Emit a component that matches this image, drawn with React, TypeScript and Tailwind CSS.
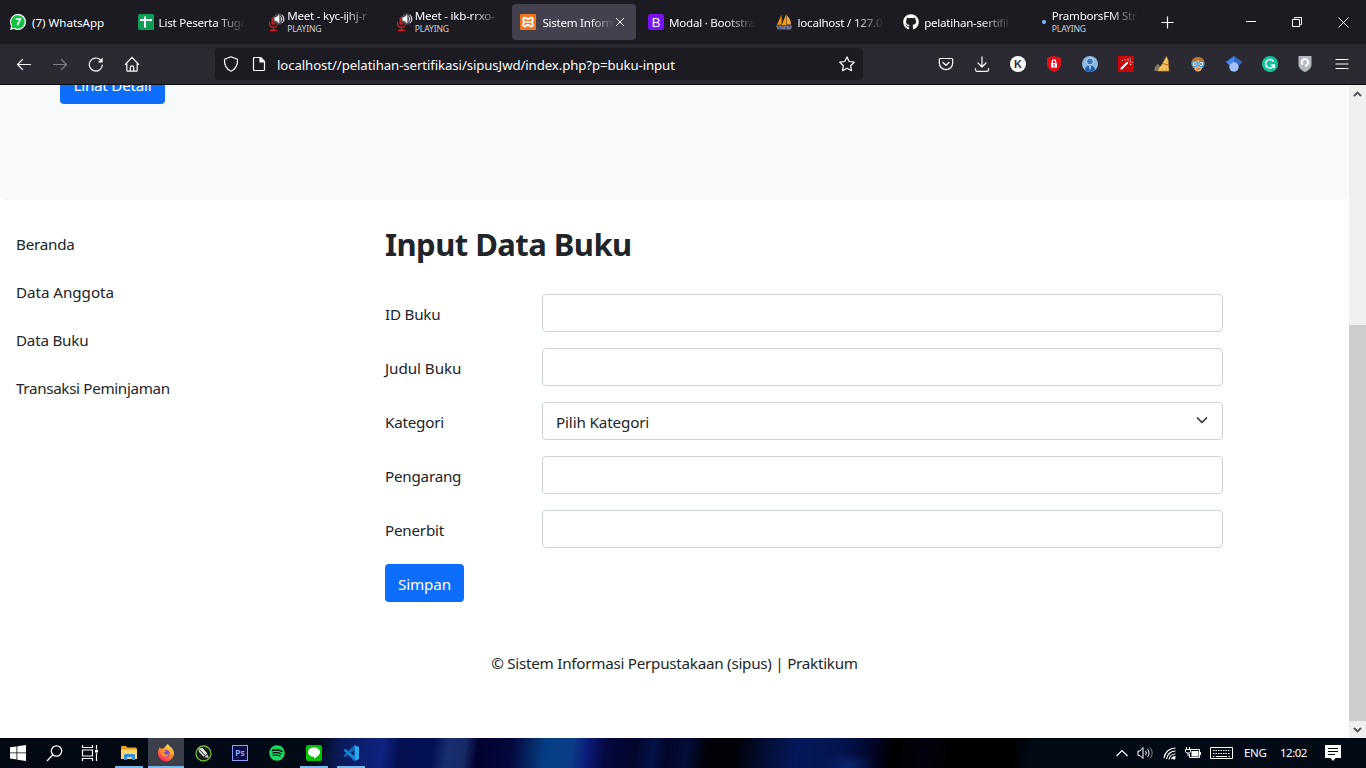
import React from "react";
import { FaGithub, FaSpotify } from "react-icons/fa";

const FONT = "font-['Noto_Sans','Open_Sans',sans-serif]";

function MicIcon() {
  return (
    <svg width="20" height="20" viewBox="0 0 20 20" fill="none">
      <rect x="4.500" y="5" width="3.600" height="8" rx="1.800" fill="#b3261e" />
      <path d="M2.500 9.500v1.700a4 4 0 0 0 8 0V9.500M6.500 15v3M3 18.300h7" stroke="#d3241f" strokeWidth="1.300" />
      <circle cx="12" cy="7" r="5.800" fill="#4b4a57" />
      <path d="M7.500 5.300h1.800l3-2.800v9l-3-2.800H7.500z" fill="#fff" />
      <path d="M13.500 4.500a3.300 3.300 0 0 1 0 5M14.800 3a5 5 0 0 1 0 8" stroke="#ddd" strokeWidth="1" />
    </svg>
  );
}

const WhatsAppIcon = () => (
  <svg width="16" height="16" viewBox="0 0 16 16">
    <path d="M0 16l1.100-4A8 8 0 1 1 4 14.900z" fill="#fff" />
    <path d="M1.400 14.600l.8-2.900a6.800 6.800 0 1 1 2.200 2.100z" fill="#12c143" />
    <path d="M5.500 5h4.800L7.300 11.500" stroke="#fff" strokeWidth="1.700" fill="none" />
  </svg>
);
const SheetIcon = () => (
  <svg width="16" height="16" viewBox="0 0 16 16">
    <rect width="16" height="16" rx="1.500" fill="#0f9d58" />
    <path d="M2 6h12M7 2.500v11" stroke="#fff" strokeWidth="2" />
  </svg>
);
const XamppIcon = () => (
  <svg width="16" height="16" viewBox="0 0 16 16" fill="none">
    <rect width="16" height="16" rx="1" fill="#f37623" />
    <path d="M5.300 3.700h-.6a1.400 1.400 0 0 0-1.400 1.400v.8c0 .9.600 1.600 1.400 2.100-.8.500-1.400 1.200-1.400 2.100v.8a1.400 1.400 0 0 0 1.400 1.400h.6c1.100 0 1.300-1.500 2.700-1.500s1.600 1.500 2.700 1.500h.6a1.400 1.400 0 0 0 1.400-1.400v-.8c0-.9-.6-1.600-1.400-2.100.8-.5 1.400-1.200 1.400-2.100v-.8a1.400 1.400 0 0 0-1.400-1.400h-.6C9.600 3.700 9.400 5.200 8 5.200S6.400 3.700 5.300 3.700z" stroke="#fff" strokeWidth="2" />
    <path d="M6 8h4" stroke="#fff" strokeWidth="1.600" />
  </svg>
);
const BootstrapIcon = () => (
  <span className="flex h-4 w-4 items-center justify-center rounded-[3px] bg-[#7a12f9] font-['Liberation_Sans',sans-serif] text-[13px] leading-none text-white">B</span>
);
const PmaIcon = () => (
  <svg width="16" height="16" viewBox="0 0 16 16">
    <path d="M5 1.500L1 11l4-.5zM10 .5L5.800 11h4.500z" fill="#f89c0e" />
    <path d="M5.300 2c1.200 3 1.200 6 .5 9M11 1.500c3 3 4 6 4 9h-4z" fill="#f5a83a" />
    <path d="M5.300 1v10M10.500 0v11" stroke="#a56a2a" strokeWidth=".8" />
    <path d="M0 11.500h16l-1 4H1.500z" fill="#777b9f" />
    <path d="M2 13h2M6 13h1.500M9 14h2M12.500 13h1.500M3 15h3" stroke="#373a52" />
  </svg>
);

type Tab = { icon: React.ReactNode; title: string; playing?: boolean; active?: boolean; cls: string };
const tabs: Tab[] = [
  { icon: <WhatsAppIcon />, title: "(7) WhatsApp", cls: "pl-1.5" },
  { icon: <SheetIcon />, title: "List Peserta Tuga", cls: "pl-[5px]" },
  { icon: <MicIcon />, title: "Meet - kyc-ijhj-r", playing: true, cls: "pl-[2px]" },
  { icon: <MicIcon />, title: "Meet - ikb-rrxo-", playing: true, cls: "pl-[2px]" },
  { icon: <XamppIcon />, title: "Sistem Inform", active: true, cls: "pl-[6px]" },
  { icon: <BootstrapIcon />, title: "Modal · Bootstra", cls: "pl-[5px]" },
  { icon: <PmaIcon />, title: "localhost / 127.0", cls: "pl-[6px]" },
  { icon: <FaGithub size={16} color="#fff" />, title: "pelatihan-sertifil", cls: "pl-[5px]" },
  { icon: <span className="ml-[11px] block h-1 w-1 rounded-full bg-[#7cc0ff]" />, title: "PramborsFM Str", playing: true, cls: "pl-[5px]" },
];

function TabItem({ tab }: { tab: Tab }) {
  const meet = tab.title.startsWith("Meet");
  const fade = tab.title !== "(7) WhatsApp";
  return (
    <div className={"flex h-9 w-[124px] shrink-0 items-center rounded-[4px] pl-2 " + (tab.active ? "bg-[#42414d]" : "")}>
      <div className={"flex shrink-0 items-center " + (meet ? "ml-[2px] w-5" : "w-4")}>{tab.icon}</div>
      <div className={"flex min-w-0 flex-1 flex-col " + tab.cls + (meet ? " -ml-[2px]" : "")}>
        <div className={"whitespace-nowrap text-[11.600px] leading-[15px] text-[#fbfbfe] " + (fade ? "tracking-[-0.250px] [mask-image:linear-gradient(to_right,black_65%,transparent)] " : "tracking-[-0.020px] ") + (tab.active ? "w-[73px]" : "w-[87px]")}>
          {tab.title}
        </div>
        {tab.playing && <div className="text-[8.600px] leading-[13px] tracking-[-0.150px] text-[#d0d0d6]">PLAYING</div>}
      </div>
      {tab.active && (
        <svg className="mr-[11px] shrink-0" width="10" height="10" viewBox="0 0 10 10"><path d="M1 1l8 8M9 1l-8 8" stroke="#fbfbfe" strokeWidth="1" /></svg>
      )}
    </div>
  );
}

const S = ({ children, s = 16 }: { children: React.ReactNode; s?: number }) => (
  <svg width={s} height={s} viewBox="0 0 16 16" fill="none" stroke="#fbfbfe" strokeWidth="1.200" strokeLinecap="round" strokeLinejoin="round">{children}</svg>
);

const extensions = [
  <S><path d="M2.300 2.500h11.400a1 1 0 0 1 1 1V7A6.700 6.700 0 0 1 1.300 7V3.500a1 1 0 0 1 1-1zM5 6.500l3 2.800 3-2.800" /></S>,
  <S><path d="M8 .8v10M4 7l4 4 4-4M1.500 12.500v1.300a1.500 1.500 0 0 0 1.500 1.500h10a1.500 1.500 0 0 0 1.500-1.500v-1.300" /></S>,
  <span className="flex h-4 w-4 items-center justify-center rounded-full bg-white font-['Liberation_Sans',sans-serif] text-[11px] font-bold leading-none text-[#2b2a33]">K</span>,
  <S><path d="M8 .5l6.500 1.800V8c0 4-3 6.300-6.500 7.500C4.500 14.300 1.500 12 1.500 8V2.300z" fill="#e40d16" stroke="#ee1c24" strokeWidth=".8" /><path d="M5 7h6v4.500H5z" fill="#fff" stroke="none" /><path d="M6.300 7V5.500a1.700 1.700 0 0 1 3.400 0V7" /><path d="M8 8.600v1.200" stroke="#e40d16" /></S>,
  <S><circle cx="8" cy="8" r="8" fill="#8db9e5" stroke="none" /><circle cx="8" cy="5.500" r="3.500" fill="#3a76b8" stroke="#c4e0fa" strokeWidth="1" /><path d="M3 14c0-3 2-4.500 5-4.500s5 1.500 5 4.500a8 8 0 0 1-10 0z" fill="#1e60ac" stroke="none" /><path d="M7 10l1 5 1-5z" fill="#c4e0fa" stroke="none" /></S>,
  <S><path d="M0 0h16v16H0z" fill="#c90505" stroke="none" /><path d="M3.500 12.500L9 7" strokeWidth="2.200" /><path d="M7 3.500l.5.700M10 3v1M12.500 5l-1 .7M13 8.500l-1-.4M4.500 4.500h.1M12.500 2.500h.1M14 6.500h.1" strokeWidth="1" /></S>,
  <S><path d="M.5 15c-.5-3 1-6 4-7l4 7z" fill="#77796f" stroke="none" /><path d="M12.500.8c1.500 2 2 4.500 1.700 7L15 15H4c.500-2.500 1.500-4 3-5z" fill="#f0c761" stroke="#c48b30" strokeWidth=".7" /><path d="M8.500 7.500l5.500 1.500" stroke="#c95520" strokeWidth="1" /><path d="M9 12l-1 2.500M12 12v2.500" stroke="#d89a35" strokeWidth=".9" /></S>,
  <S><path d="M1.500 8C1 3.500 4 1 8 1s7 2.500 6.500 7l-1.500 4H3z" fill="#b8752f" stroke="none" /><path d="M4 6l4-2 4 2v5c0 3-2 4.500-4 4.500S4 14 4 11z" fill="#f4b978" stroke="none" /><circle cx="4.700" cy="8" r="2.600" fill="#e9f7ff" stroke="#3d9bdc" /><circle cx="11.300" cy="8" r="2.600" fill="#e9f7ff" stroke="#3d9bdc" /><circle cx="5" cy="8" r=".8" fill="#222" stroke="none" /><circle cx="11" cy="8" r=".8" fill="#222" stroke="none" /><path d="M6.500 13h3" stroke="#b03c2c" strokeWidth=".9" /></S>,
  <S><path d="M8 0l8 6-3.500 3.500h-9L0 6z" fill="#4285f4" stroke="none" /><path d="M8 0l8 6-3.500 3.500L8 6z" fill="#356ac3" stroke="none" /><circle cx="8" cy="11" r="4.700" fill="#a0c3ff" stroke="none" /></S>,
  <S><circle cx="8" cy="8" r="8" fill="#15c39a" stroke="none" /><path d="M11.300 5A4.300 4.300 0 1 0 12 9.200M9.500 9h2.800v2.500" strokeWidth="1.500" /></S>,
  <S><path d="M1.500 0h13v8.500c0 3.500-3 6-6.500 7.500-3.500-1.500-6.500-4-6.500-7.500z" fill="#b3b7bf" stroke="none" /><path d="M5.300 8A3.200 3.200 0 1 1 10 8.800L8.500 9.800" strokeWidth="2" stroke="#fff" /></S>,
];

function Toolbar() {
  return (
    <div className="flex h-[41px] shrink-0 items-center border-b border-[#0c0c0d] bg-[#2b2a33]">
      <div className="flex w-[215px] shrink-0 items-center gap-5 pl-4">
        <S><path d="M1.500 8.500h13M6.500 3.500l-5 5 5 5" /></S>
        <div className="opacity-40"><S><path d="M1.500 8.500h13M9.500 3.500l5 5-5 5" /></S></div>
        <S><path d="M14.300 9A6.500 6.500 0 1 1 12.500 4" /><path d="M14.600 1.500v5H9.600z" fill="#fbfbfe" stroke="none" /></S>
        <S><path d="M1.300 8.300L8 1.300l6.700 7M2.800 7v7.200a1 1 0 0 0 1 1h8.400a1 1 0 0 0 1-1V7M6.300 15v-3.500a1.700 1.700 0 0 1 3.400 0V15" /></S>
      </div>
      <div className="flex h-8 w-[648px] shrink-0 items-center rounded-[4px] bg-[#1c1b22] pl-2">
        <S><path d="M8 .8l6.500 2.400c.3 5.500-1.500 9.800-6.500 12C3 13 1.200 8.700 1.500 3.200z" /></S>
        <div className="ml-3 flex"><S><path d="M3.500 1.500h6L13.500 5.500v8a1 1 0 0 1-1 1h-9a1 1 0 0 1-1-1v-11a1 1 0 0 1 1-1z" /><path d="M9 1.500l4.500 4.500H9z" fill="#fbfbfe" /></S></div>
        <div className="ml-[10px] flex-1 whitespace-nowrap pt-px text-[13.200px] leading-5 tracking-[-0.080px] text-[#fbfbfe]">localhost//pelatihan-sertifikasi/sipusJwd/index.php?p=buku-input</div>
        <div className="mr-2"><S><path d="M8 .9l2.200 4.600 5 .7-3.600 3.500.9 5L8 12.300l-4.500 2.400.9-5L.8 6.200l5-.7z" /></S></div>
      </div>
      <div className="ml-[75px] flex items-center gap-5">
        {extensions.map((e, i) => <div key={i} className={"flex h-4 w-4 items-center" + (i === 10 ? " -ml-px mr-px" : "")}>{e}</div>)}
      </div>
      <div className="ml-5"><S><path d="M2 3.500h12M2 8h12M2 12.500h12" /></S></div>
    </div>
  );
}

const fields = ["ID Buku", "Judul Buku", "Kategori", "Pengarang", "Penerbit"];

function Page() {
  return (
    <div className="flex h-[653px] shrink-0 bg-white">
      <div className="flex w-[1349px] flex-col overflow-hidden text-[15.200px] leading-6 tracking-[-0.220px] text-[#212529]">
        <div className="h-[115px] shrink-0 overflow-hidden rounded-b-[5px] bg-[#f8f9fa] pl-[60px]">
          <div className="-mt-[19px] flex h-[38px] w-[105px] items-center justify-center rounded-[4px] bg-[#0d6efd] text-white">Lihat Detail</div>
        </div>
        <div className="flex">
          <nav className="flex w-[385px] flex-col gap-6 pl-4 pt-8">
            <a>Beranda</a><a className="tracking-[-0.050px]">Data Anggota</a><a>Data Buku</a><a className="tracking-[-0.330px]">Transaksi Peminjaman</a>
          </nav>
          <main className="w-[838px]">
            <h1 className="mt-6 text-[31px] font-bold leading-[40px] tracking-[-0.550px]">Input Data Buku</h1>
            <div className="mt-[30px] flex flex-col gap-4">
              {fields.map((f) => (
                <div key={f} className="flex h-[38px]">
                  <label className={"w-[157px] pt-2 " + (f === "Judul Buku" ? "tracking-[-0.050px]" : "")}>{f}</label>
                  <div className="flex flex-1 items-center justify-between rounded-[4px] border border-[#ced4da] px-[13px] pt-[2px]">
                    {f === "Kategori" && (
                      <>
                        <span className="tracking-[-0.130px]">Pilih Kategori</span>
                        <svg className="mb-1" width="14" height="12" viewBox="0 0 14 12"><path d="M2.500 4L7 8.500 11.500 4" fill="none" stroke="#343a40" strokeWidth="1.700" strokeLinecap="round" strokeLinejoin="round" /></svg>
                      </>
                    )}
                  </div>
                </div>
              ))}
              <button className="h-[38px] w-[79px] rounded-[4px] bg-[#0d6efd] pt-[2px] tracking-[-0.100px] text-white">Simpan</button>
            </div>
          </main>
        </div>
        <footer className="mt-[49px] text-center tracking-[-0.250px]">© Sistem Informasi Perpustakaan (sipus) | Praktikum</footer>
      </div>
      <div className="flex w-[17px] flex-col items-center bg-[#f0f0f0]">
        <div className="flex h-[17px] items-center"><svg width="9" height="6" viewBox="0 0 9 6"><path d="M1 5l3.500-3.500L8 5" fill="none" stroke="#505050" strokeWidth="1.900" /></svg></div>
        <div className="mt-[223px] h-[396px] w-full bg-[#cdcdcd]" />
        <div className="flex h-[17px] items-center"><svg width="9" height="6" viewBox="0 0 9 6"><path d="M1 1l3.500 3.500L8 1" fill="none" stroke="#505050" strokeWidth="1.900" /></svg></div>
      </div>
    </div>
  );
}

const apps = [
  { open: true, icon: <svg width="16" height="14" viewBox="0 0 16 14"><path d="M0 1.500Q0 0 1 0h4l1.500 1.500H15l1 1.500v10H0z" fill="#e5a41b" /><path d="M0 3.500h16V13H0z" fill="#ffd667" /><path d="M3 14V9a1 1 0 0 1 1-1h9a1 1 0 0 1 1 1v5h-3v-3H6v3z" fill="#2f8fdc" /></svg> },
  { open: true, active: true, icon: <svg width="18" height="18" viewBox="0 0 18 18"><defs><linearGradient id="fx" x1=".8" y1="0" x2=".2" y2="1"><stop offset="0" stopColor="#fff14a" /><stop offset=".45" stopColor="#ff9228" /><stop offset="1" stopColor="#f5156c" /></linearGradient></defs><path d="M11 0c1 2.500 5.500 4 6 9a8 8 0 0 1-16 1C.8 7 1.500 5 3 3l.8 2C5 4 6 4 7 4.500 8 2.500 9.500 1 11 0z" fill="url(#fx)" /><circle cx="9" cy="9.500" r="3.600" fill="#7248e4" /><path d="M3.500 7c2-1.500 4-1 5.500.2L7 9c1 2 3.500 2 5 .5-1 5-8.500 4.500-8.500-2.500z" fill="#ff9526" /></svg> },
  { icon: <svg width="17" height="17" viewBox="0 0 17 17"><circle cx="8.500" cy="8.500" r="7.500" fill="#151b14" stroke="#72b53c" strokeWidth="1.300" /><path d="M3.500 3.500l4-.5 4.800 5.500-3.500 3.200L4 7z" fill="#e9e9e9" /><path d="M9.500 12.200l3.300-3L13.500 13z" fill="#c9c9c9" /><path d="M4.500 4.500l5.500 6" stroke="#333" strokeWidth="1.100" /></svg> },
  { icon: <span className="flex h-4 w-4 items-center justify-center border border-[#8d9df5] bg-[#0b0d48] text-[8.500px] font-semibold leading-none text-[#a5b0ff]">Ps</span> },
  { icon: <FaSpotify size={16} color="#1ed760" /> },
  { open: true, icon: <svg width="16" height="16" viewBox="0 0 16 16"><rect width="16" height="16" rx="2" fill="#00c300" /><path d="M8 2.500c3.500 0 6 2 6 4.700 0 2.600-3 4.300-6 6.600v-2c-3.500-.2-6-2-6-4.600 0-2.700 2.500-4.700 6-4.700z" fill="#fff" /></svg> },
  { open: true, icon: <svg width="16" height="16" viewBox="0 0 16 16" fill="none"><path d="M11.500 0v4.800L2.300 12.300.5 10.800z" fill="#0b6fb8" /><path d="M.5 5.200l1.800-1.500 9.200 7.500V16z" fill="#1688d4" /><path d="M11.500 0L16 2v12l-4.500 2z" fill="#2ca8f2" /></svg> },
];

function Taskbar() {
  return (
    <div className="flex h-[30px] shrink-0 items-center bg-[radial-gradient(ellipse_26px_14px_at_848px_28px,#07246a,transparent),linear-gradient(98deg,#020912_0px,#020a16_315px,#0a1a5a_338px,#0f2380_380px,#041052_397px,#041056_430px,#182e70_445px,#172a66_462px,#020230_474px,#03083c_508px,#063e84_542px,#0b3d86_568px,#0c1c7a_583px,#04083e_602px,#03062c_630px,#041246_648px,#02062a_662px,#030d38_682px,#010108_702px,#010208_730px,#04103c_765px,#04185a_790px,#041450_835px,#020526_868px,#000002_885px,#02020e_920px,#000000_950px,#000000_1005px,#020a16_1022px,#020a16_1366px)] text-white">
      <div className="flex h-full">
        <div className="flex w-9 items-center justify-center"><svg width="16" height="16" viewBox="0 0 16 16" fill="#fff"><path d="M0 2.300l6.500-.9v6.100H0zM7.300 1.300L16 0v7.500H7.300zM0 8.300h6.500v6.200L0 13.600zM7.300 8.300H16V16l-8.700-1.300z" /></svg></div>
        <div className="flex w-9 items-center justify-center"><svg width="17" height="17" viewBox="0 0 17 17" fill="none" stroke="#fff" strokeWidth="1.300"><circle cx="10.500" cy="6" r="5.200" /><path d="M6.800 9.800L1 16" /></svg></div>
        <div className="flex w-9 items-center justify-center"><svg width="18" height="16" viewBox="0 0 18 16" fill="none" stroke="#fff" strokeWidth="1.200"><path d="M1.500 0v2.500h10V0M1.500 16v-2.500h10V16M1.500 5h10v6h-10zM15.500 0v4.500M15.500 8v8" /><path d="M14 5h3v2.500h-3z" fill="#fff" stroke="none" /></svg></div>
      </div>
      <div className="ml-[3px] flex h-full gap-px">
        {apps.map((a, i) => (
          <div key={i} className={"flex w-9 flex-col items-center " + (a.active ? "bg-[#3a3f49]" : "")}>
            <div className="flex h-7 items-center pt-[2px]">{a.icon}</div>
            {a.open && <div className={"h-[2px] bg-[#76b9ed] " + (a.active ? "w-9" : "w-7")} />}
          </div>
        ))}
      </div>
      <div className="ml-auto flex items-center pr-[25px] text-[12px]">
        <svg width="12" height="8" viewBox="0 0 12 8"><path d="M.5 7L6 1.500 11.500 7" fill="none" stroke="#fff" strokeWidth="1.200" /></svg>
        <svg className="ml-[9px]" width="17" height="14" viewBox="0 0 17 14" fill="none" stroke="#fff"><path d="M1 5h2l3-3.500v11L3 9.500H1zM8.500 5a3 3 0 0 1 0 4M10.500 3a6 6 0 0 1 0 8" /><path d="M13 1.500a8 8 0 0 1 0 11" opacity=".5" /></svg>
        <svg className="ml-[9px]" width="14" height="14" viewBox="0 0 14 14" fill="none" stroke="#fff" strokeWidth="1.200"><path d="M1 12A11.500 11.500 0 0 1 12.500 2M3.500 13A9 9 0 0 1 12.500 5M6 13.500A6.500 6.500 0 0 1 12.500 8" /><circle cx="11" cy="12" r="1.600" fill="#fff" stroke="none" /><path d="M8.500 13a4 4 0 0 1 4-2.500" /></svg>
        <svg className="ml-2" width="17" height="14" viewBox="0 0 17 14" fill="none" stroke="#fff"><path d="M6 3.500h8.500v8H4.500V8M15.500 6v3M1.500 1v2M4.500 1v2M.5 3.500h5v2l-1 1.500h-3l-1-1.500zM3 7v3" /><path d="M6.500 5h7v5.500h-7z" fill="#fff" stroke="none" /></svg>
        <svg className="ml-2" width="23" height="14" viewBox="0 0 23 14" fill="none" stroke="#fff"><path d="M.5 1.500h22v11H.5z" /><path d="M3 4.500h17M3 7.500h17" strokeDasharray="1.500 1" /><path d="M3 10.500h1.500M6 10.500h11M18.500 10.500H20" /></svg>
        <span className="ml-[11px] w-[24px] whitespace-nowrap text-[11.500px] tracking-[-0.300px]">ENG</span>
        <span className="ml-3 w-[28px] whitespace-nowrap text-[11.500px] tracking-[-0.500px]">12:02</span>
        <svg className="ml-[17px]" width="16" height="16" viewBox="0 0 16 16"><path d="M0 0h16v13h-5.500L8 16l-2.500-3H0z" fill="#fff" /><path d="M3 3.500h10M3 6.500h10M3 9.500h7" stroke="#02070e" /></svg>
      </div>
    </div>
  );
}

export default function App() {
  return (
    <div className={"flex h-[768px] w-[1366px] flex-col overflow-hidden " + FONT}>
      <div className="flex h-11 shrink-0 items-center bg-[#1c1b22] pl-[2px]">
        <div className="flex gap-[3.600px]">{tabs.map((t) => <TabItem key={t.title} tab={t} />)}</div>
        <svg className="ml-[14.200px]" width="13" height="13" viewBox="0 0 13 13"><path d="M6.500 .5v12M.5 6.500h12" stroke="#fbfbfe" strokeWidth="1.200" /></svg>
        <div className="ml-auto flex items-center gap-9 pr-[17px]">
          <svg width="10" height="10" viewBox="0 0 10 10"><path d="M0 4.500h10" stroke="#fff" /></svg>
          <svg width="10" height="10" viewBox="0 0 10 10" fill="none" stroke="#fff"><path d="M.5 2.500h7v7h-7zM2.500 2.500v-2h7v7h-2" /></svg>
          <svg width="11" height="11" viewBox="0 0 11 11"><path d="M.5.5l10 10M10.500.5l-10 10" stroke="#fff" /></svg>
        </div>
      </div>
      <Toolbar />
      <Page />
      <Taskbar />
    </div>
  );
}
